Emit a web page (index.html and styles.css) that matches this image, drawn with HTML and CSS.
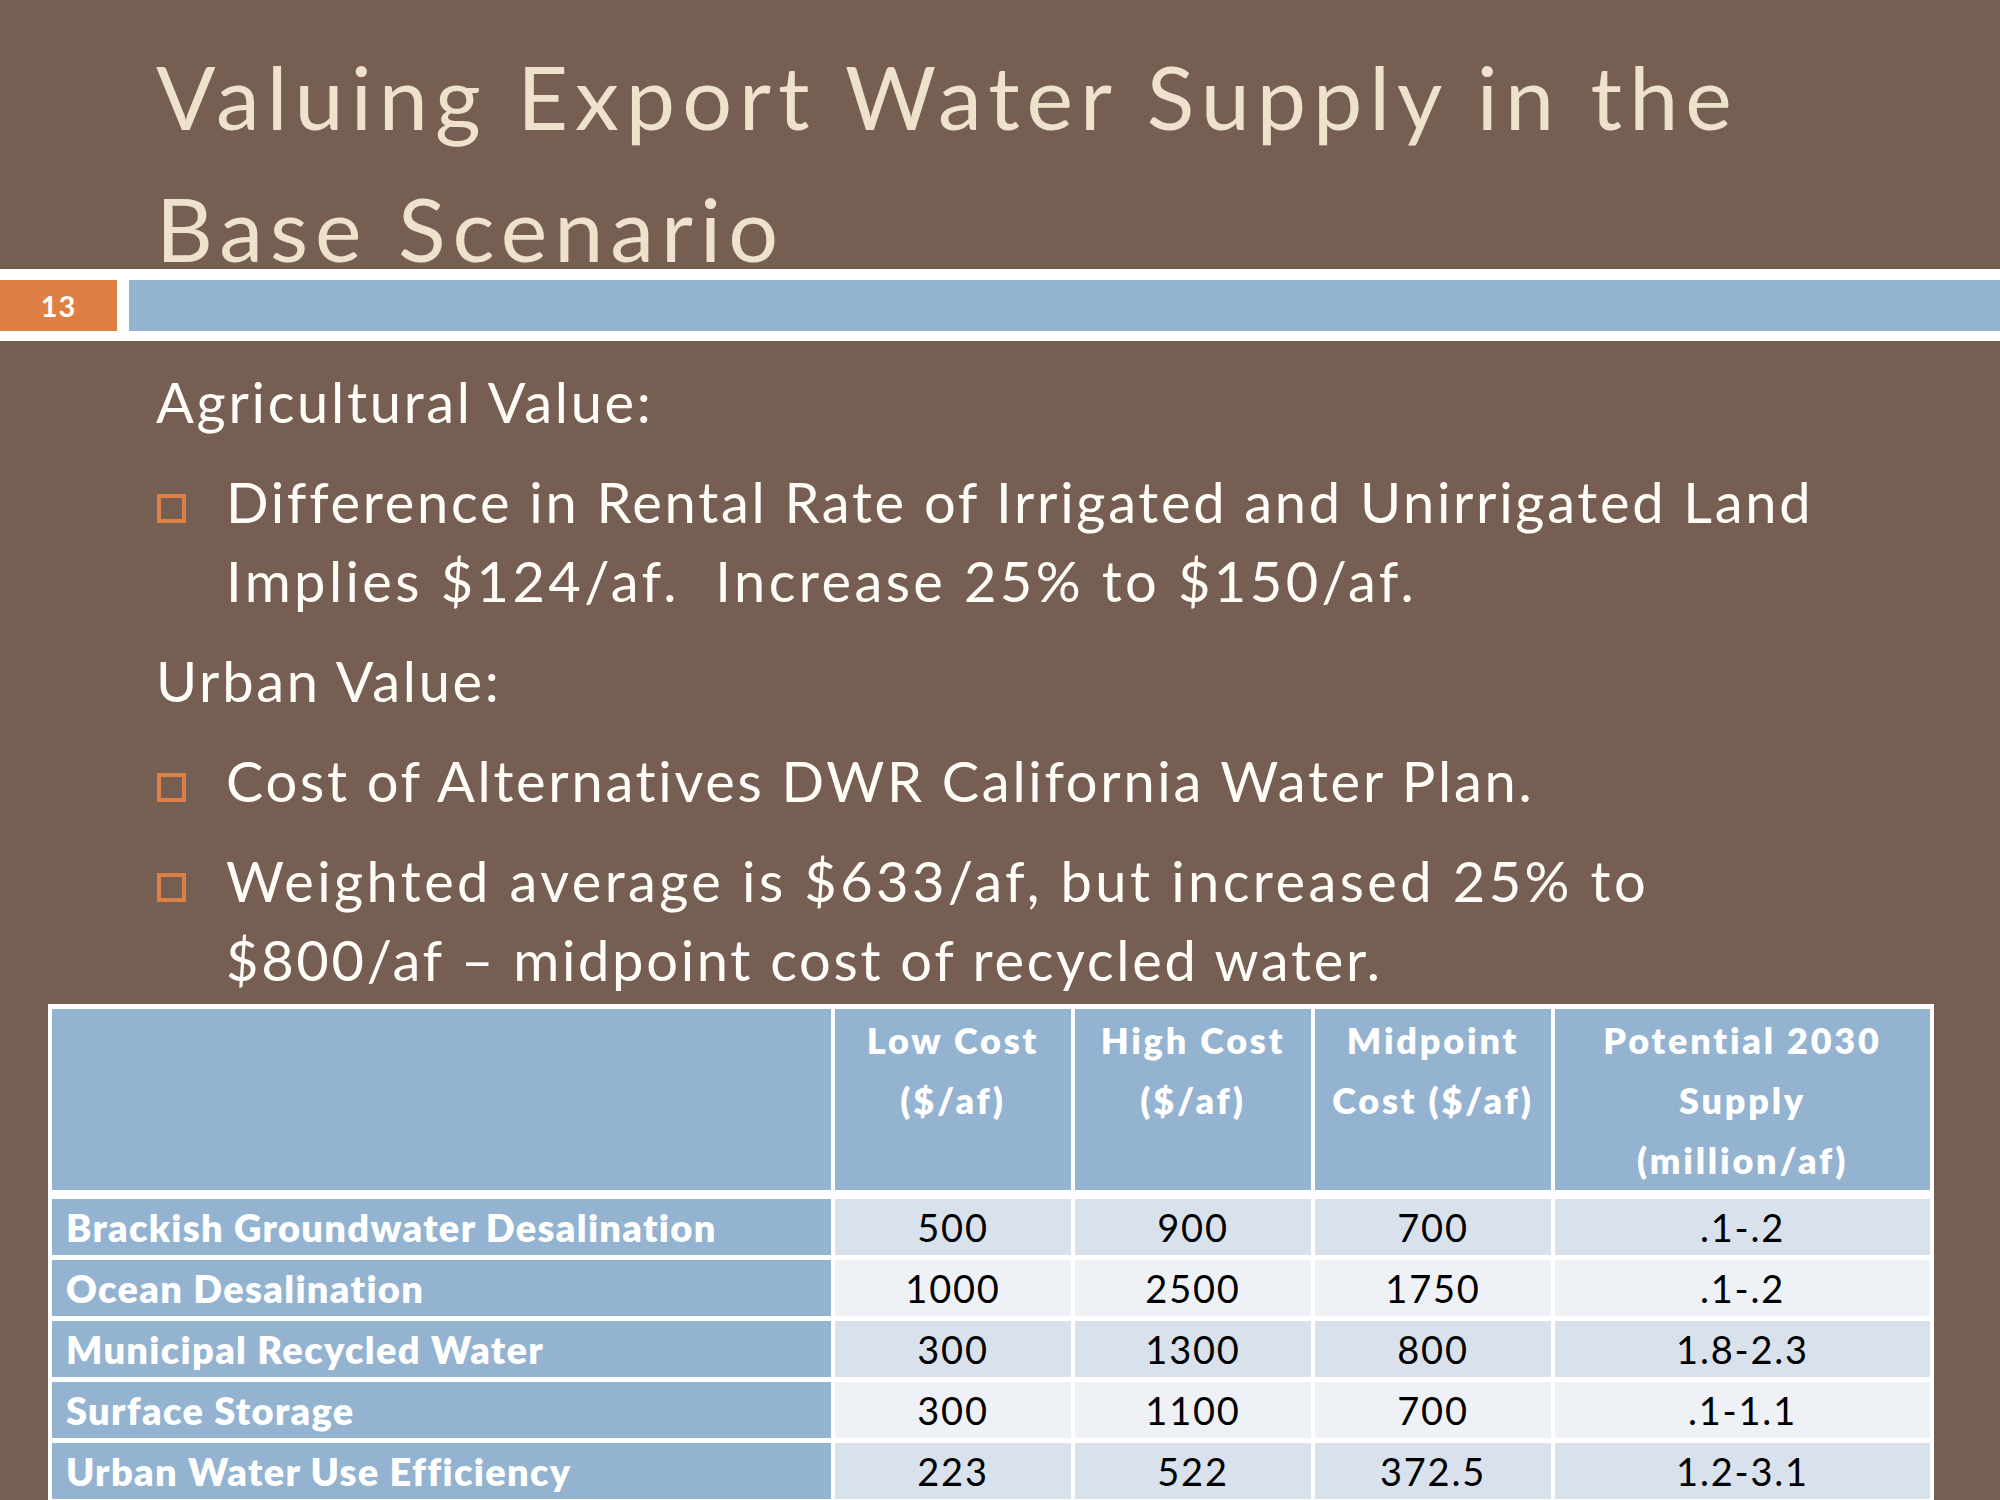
FILE: index.html
```html
<!DOCTYPE html>
<html>
<head>
<meta charset="utf-8">
<title>Valuing Export Water Supply in the Base Scenario</title>
<link rel="stylesheet" href="styles.css">
</head>
<body>
<div class="slide">
  <h1 class="title">Valuing Export Water Supply in the<br>Base Scenario</h1>
  <div class="band">
    <div class="num">13</div>
    <div class="bar"></div>
  </div>
  <div class="content">
    <p class="head">Agricultural Value:</p>
    <p class="item"><span class="bullet"></span>Difference in Rental Rate of Irrigated and Unirrigated Land<br><span class="wide">Implies $124/af.&nbsp; Increase 25% to $150/af.</span></p>
    <p class="head">Urban Value:</p>
    <p class="item"><span class="bullet"></span>Cost of Alternatives DWR California Water Plan.</p>
    <p class="item"><span class="bullet"></span><span class="wide">Weighted average is $633/af, but increased 25% to</span><br>$800/af – midpoint cost of recycled water.</p>
  </div>
  <table class="costs">
    <colgroup>
      <col class="c-name">
      <col class="c-num">
      <col class="c-num">
      <col class="c-num">
      <col class="c-supply">
    </colgroup>
    <thead>
      <tr>
        <th></th>
        <th>Low Cost<br>($/af)</th>
        <th>High Cost<br>($/af)</th>
        <th>Midpoint<br>Cost ($/af)</th>
        <th>Potential 2030<br>Supply<br>(million/af)</th>
      </tr>
    </thead>
    <tbody>
      <tr class="odd"><td class="name">Brackish Groundwater Desalination</td><td>500</td><td>900</td><td>700</td><td>.1-.2</td></tr>
      <tr class="even"><td class="name">Ocean Desalination</td><td>1000</td><td>2500</td><td>1750</td><td>.1-.2</td></tr>
      <tr class="odd"><td class="name">Municipal Recycled Water</td><td>300</td><td>1300</td><td>800</td><td>1.8-2.3</td></tr>
      <tr class="even"><td class="name">Surface Storage</td><td>300</td><td>1100</td><td>700</td><td>.1-1.1</td></tr>
      <tr class="odd"><td class="name">Urban Water Use Efficiency</td><td>223</td><td>522</td><td>372.5</td><td>1.2-3.1</td></tr>
    </tbody>
  </table>
</div>
</body>
</html>
```

FILE: styles.css
```css
html, body {
  margin: 0;
  padding: 0;
}

body {
  width: 2000px;
  height: 1500px;
  overflow: hidden;
  background: #765e52;
  font-family: Lato, "Open Sans", "DejaVu Sans", sans-serif;
}

.slide {
  width: 2000px;
  height: 1500px;
  display: flex;
  flex-direction: column;
}

.title {
  margin: 0;
  padding: 30px 0 0 156px;
  height: 239px;
  font-weight: 400;
  font-size: 88px;
  line-height: 132px;
  letter-spacing: 7px;
  color: #eee2cc;
  white-space: nowrap;
}

.band {
  flex: none;
  height: 51px;
  padding: 11px 0 10px;
  background: #ffffff;
  display: flex;
  gap: 12px;
}

.num {
  width: 117px;
  background: #df7f43;
  color: #ffffff;
  font-weight: 700;
  font-size: 29px;
  letter-spacing: 1px;
  display: flex;
  align-items: center;
  justify-content: center;
}

.bar {
  flex: 1;
  background: #93b3d1;
}

.content {
  padding-left: 156px;
  color: #fffdf7;
  font-size: 56px;
  line-height: 79px;
  letter-spacing: 2.7px;
  white-space: nowrap;
}

.content p {
  margin: 21px 0 0;
}

.content .wide {
  letter-spacing: 3.4px;
}

.item {
  padding-left: 70px;
  text-indent: -70px;
}

.bullet {
  display: inline-block;
  box-sizing: border-box;
  width: 29px;
  height: 29px;
  margin-left: 1px;
  margin-right: 40px;
  border: 4px solid #dd8047;
  text-indent: 0;
  letter-spacing: 0;
}

.costs {
  margin: 5px 0 0 48px;
  width: 1886px;
  table-layout: fixed;
  border-collapse: separate;
  border-spacing: 4px 5px;
  background: #ffffff;
}

.c-name { width: 779px; }
.c-num { width: 236px; }
.c-supply { width: 375px; }

.costs th {
  background: #93b3d1;
  color: #ffffff;
  font-weight: 800;
  font-size: 36px;
  line-height: 60px;
  letter-spacing: 2.8px;
  text-align: center;
  vertical-align: top;
  padding: 1px 0 0;
  border-bottom: 4px solid #ffffff;
  white-space: nowrap;
}

.costs thead tr {
  height: 184px;
}

.costs tbody tr {
  height: 56px;
}

.costs td {
  padding: 0;
  font-size: 38px;
  line-height: 1;
  letter-spacing: 1.8px;
  text-align: center;
  vertical-align: middle;
  color: #000000;
  white-space: nowrap;
}

.costs tr.odd td { background: #d9e2ec; }
.costs tr.even td { background: #eef2f7; }

.costs td.name {
  background: #93b3d1;
  color: #ffffff;
  font-weight: 800;
  letter-spacing: 1.3px;
  text-align: left;
  padding-left: 14px;
}

.costs tr.odd td.name,
.costs tr.even td.name {
  background: #93b3d1;
}
```
